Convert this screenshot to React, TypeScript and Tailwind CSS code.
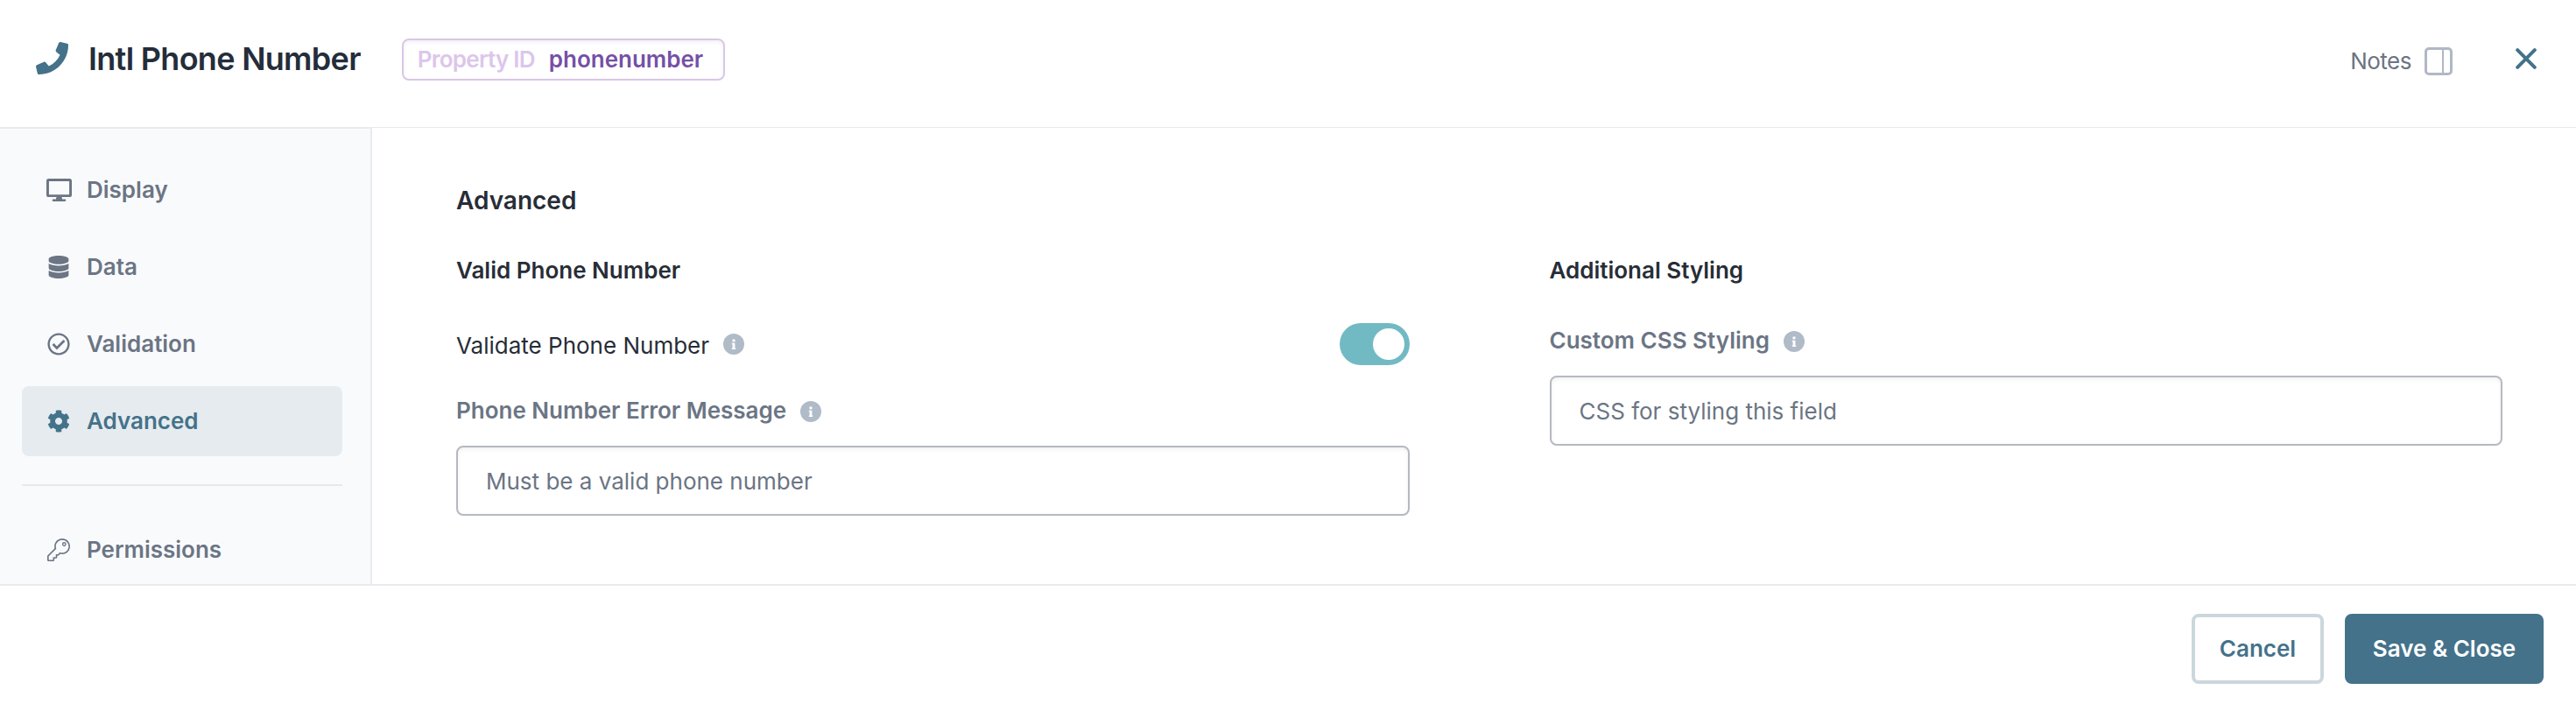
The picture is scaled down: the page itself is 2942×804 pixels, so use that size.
import type { ReactNode } from "react";
import { FaCog, FaDatabase, FaPhone, FaRegCheckCircle } from "react-icons/fa";

function DesktopIcon() {
  return (
    <svg viewBox="0 0 576 512" className="h-[26px] w-[29px]" fill="currentColor" fillRule="evenodd">
      <path d="M528 0H48C21.5 0 0 21.5 0 48v320c0 26.5 21.5 48 48 48h180l-12 48h-60c-13.3 0-24 10.7-24 24s10.7 24 24 24h264c13.3 0 24-10.7 24-24s-10.7-24-24-24h-60l-12-48h180c26.500 0 48-21.500 48-48V48c0-26.500-21.500-48-48-48zM58 58h460v300H58z" />
    </svg>
  );
}

function KeyIcon() {
  return (
    <svg viewBox="0 0 512 512" className="size-[26px]" fill="currentColor">
      <path d="M336 32c79.529 0 144 64.471 144 144s-64.471 144-144 144c-18.968 0-37.076-3.675-53.661-10.339L240 352h-48v64h-64v64H32v-80l170.339-170.339C195.675 213.076 192 194.968 192 176c0-79.529 64.471-144 144-144m0-32c-97.184 0-176 78.769-176 176 0 15.307 1.945 30.352 5.798 44.947L7.029 379.716A24.003 24.003 0 0 0 0 396.686V488c0 13.255 10.745 24 24 24h112c13.255 0 24-10.745 24-24v-40h40c13.255 0 24-10.745 24-24v-40h19.314c6.365 0 12.470-2.529 16.971-7.029l30.769-30.769C305.648 350.055 320.693 352 336 352c97.184 0 176-78.769 176-176S433.231 0 336 0z" />
      <circle cx="380" cy="128" r="34" fill="none" stroke="currentColor" strokeWidth="26" />
    </svg>
  );
}

function PanelIcon() {
  return (
    <svg viewBox="0 0 32 32" className="size-8" fill="none" stroke="currentColor">
      <rect x="1.5" y="1.5" width="29" height="29" rx="3.500" strokeWidth="3" />
      <path d="M21 2v28" strokeWidth="2" />
    </svg>
  );
}

function CloseIcon() {
  return (
    <svg viewBox="0 0 24 24" className="size-6" fill="none" stroke="currentColor" strokeWidth="4" strokeLinecap="round">
      <path d="M2.200 2.200 21.800 21.800M21.800 2.200 2.200 21.800" />
    </svg>
  );
}

function Info() {
  return (
    <svg viewBox="0 0 24 24" className="size-6 shrink-0">
      <circle cx="12" cy="12" r="12" fill="#b0bbc8" />
      <circle cx="12" cy="7.9" r="1.700" fill="#fff" />
      <path d="M9.800 10.700h3.600v5.800h.8v1.600H9.800v-1.600h.8v-4.200h-.8z" fill="#fff" />
    </svg>
  );
}

function NavItem({ icon, label, active }: { icon: ReactNode; label: string; active?: boolean }) {
  return (
    <a
      className={
        active
          ? "flex h-20 shrink-0 items-center rounded-lg bg-[#e6ebef] pl-6 font-semibold text-[#44728a]"
          : "flex h-20 shrink-0 items-center rounded-lg pl-6 font-semibold text-[#6b7584]"
      }
    >
      <span className="mr-3.5 flex w-9 justify-center">{icon}</span>
      {label}
    </a>
  );
}

function FieldLabel({ children }: { children: ReactNode }) {
  return (
    <label className="mb-6 flex h-8 items-center gap-4 font-semibold text-[#6b7584]">
      {children}
      <span className="pt-0.5"><Info /></span>
    </label>
  );
}

function TextField({ placeholder }: { placeholder: string }) {
  return (
    <input
      className="block h-20 w-full rounded-lg border-2 border-[#b5b9c1] bg-white px-8 shadow-[inset_0_2px_4px_rgba(60,60,90,0.08)] placeholder:text-[#6b7584] placeholder:opacity-100"
      placeholder={placeholder}
    />
  );
}

export default function App() {
  return (
    <div className="flex h-[804px] w-full flex-col overflow-hidden bg-white font-['Inter',sans-serif] text-[26px] leading-8 text-[#272d37]">
      <header className="flex h-[145px] shrink-0 items-start pl-[41px] pr-[45px]">
        <FaPhone className="mt-12 size-[37px] text-[#44728a]" />
        <h1 className="ml-[23px] mt-11 text-[36px] font-semibold leading-[46px] tracking-[-0.7px] text-[#242d3a]">Intl Phone Number</h1>
        <div className="ml-[47px] mt-11 flex h-12 w-[369px] items-center rounded-lg border-2 border-[#dac6e8] pl-4 font-semibold shadow-[inset_0_2px_4px_rgba(60,60,90,0.08)]">
          <span className="w-[150px] tracking-[-0.750px] text-[#dcc6eb]">Property ID</span>
          <span className="text-[#7550a6]">phonenumber</span>
        </div>
        <div className="ml-auto mt-[54px] flex h-8 items-center">
          <span className="mr-[15px] tracking-[-0.5px] text-[#6b7584]">Notes</span>
          <span className="text-[#b0b8c4]"><PanelIcon /></span>
        </div>
        <button className="ml-[72px] mt-[55px] text-[#44728a]"><CloseIcon /></button>
      </header>

      <div className="flex min-h-0 flex-1">
        <nav className="flex w-[425px] shrink-0 flex-col gap-2 overflow-hidden border-r-2 border-t-2 border-[#e8eaed] bg-[#f9fafc] pl-[25px] pr-8 pt-[30px]">
          <NavItem icon={<DesktopIcon />} label="Display" />
          <NavItem icon={<FaDatabase className="size-[26px]" />} label="Data" />
          <NavItem icon={<FaRegCheckCircle className="size-[26px]" />} label="Validation" />
          <NavItem icon={<FaCog className="size-[26px]" />} label="Advanced" active />
          <hr className="mb-[25px] mt-6 shrink-0 border-t-2 border-[#e6e9ec]" />
          <NavItem icon={<KeyIcon />} label="Permissions" />
        </nav>

        <main className="flex-1 border-t border-[#e8eaed] pl-24 pr-[84px] pt-[67px]">
          <h2 className="text-[28px] font-semibold leading-8">Advanced</h2>
          <div className="mt-12 grid grid-cols-2 gap-x-40">
            <section>
              <h3 className="font-semibold">Valid Phone Number</h3>
              <div className="mb-9 mt-11 flex h-12 items-center gap-4">
                <span className="mt-[3px]">Validate Phone Number</span>
                <Info />
                <button className="ml-auto flex h-12 w-20 items-center justify-end rounded-full bg-[#72bac3] pr-1.5">
                  <span className="size-9 rounded-full bg-white" />
                </button>
              </div>
              <FieldLabel>Phone Number Error Message</FieldLabel>
              <TextField placeholder="Must be a valid phone number" />
            </section>
            <section>
              <h3 className="mb-12 font-semibold">Additional Styling</h3>
              <FieldLabel>Custom CSS Styling</FieldLabel>
              <TextField placeholder="CSS for styling this field" />
            </section>
          </div>
        </main>
      </div>

      <footer className="flex h-[137px] shrink-0 items-start justify-end gap-6 border-t-2 border-[#e8eaed] pr-[37px] pt-8 font-semibold">
        <button className="h-20 w-[151px] rounded-lg border-4 border-[#cbd7dd] text-[#44728a]">Cancel</button>
        <button className="h-20 w-[227px] rounded-lg bg-[#44728a] text-white">Save &amp; Close</button>
      </footer>
    </div>
  );
}
